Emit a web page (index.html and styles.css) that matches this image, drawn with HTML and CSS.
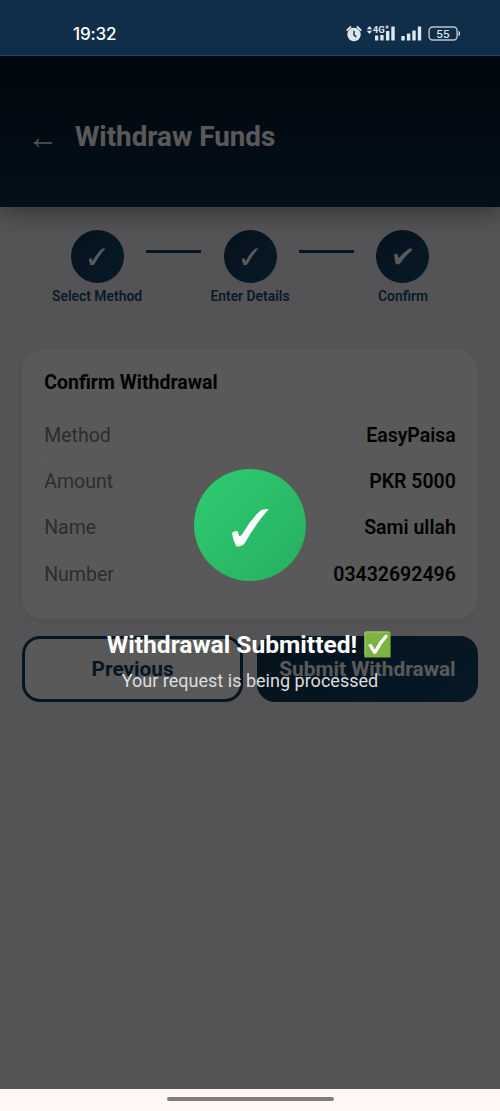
FILE: index.html
```html
<!DOCTYPE html>
<html lang="en">
<head>
<meta charset="utf-8">
<title>Withdraw Funds</title>
<link rel="stylesheet" href="styles.css">
</head>
<body>
<div class="phone">
  <div class="status">
    <span class="clock">19:32</span>
    <svg class="status-icons" width="116" height="20" viewBox="0 0 116 20" fill="#dfe7ee">
      <circle cx="9" cy="10.5" r="6.7"/>
      <path d="M2.2 6.2 5.6 3M15.8 6.2 12.4 3" stroke="#dfe7ee" stroke-width="1.8" stroke-linecap="round"/>
      <path d="M9 6.8V11l2.3 1.9" fill="none" stroke="#102d49" stroke-width="1.5"/>
      <path d="M21.8 5.2 24.5 2 27.2 5.2ZM21.8 6.8 24.5 10 27.2 6.8Z"/>
      <rect x="30" y="11.5" width="3.3" height="5" rx=".6"/><rect x="35.3" y="11" width="3.3" height="5.5" rx=".6"/><rect x="41" y="7" width="3.4" height="9.5" rx=".6"/><rect x="46.3" y="2.4" width="3.4" height="14.1" rx=".6"/>
      <text x="27.8" y="9" class="network">4G</text>
      <path d="M40.4 3h3.4M42.1 1.3v3.4" stroke="#dfe7ee" stroke-width="1.1"/>
      <rect x="56.3" y="12" width="3.4" height="4.5" rx=".6"/><rect x="61.9" y="9.5" width="3.4" height="7" rx=".6"/><rect x="67.3" y="6.4" width="3.4" height="10.1" rx=".6"/><rect x="72.8" y="2.4" width="3.4" height="14.1" rx=".6"/>
      <rect x="84.1" y="3" width="28" height="13" rx="3.5" fill="none" stroke="#b9c5d0" stroke-width="1.4"/>
      <path d="M113.5 7v5q1.5 0 1.5-2.5T113.5 7"/>
      <text x="98.1" y="13.6" text-anchor="middle" class="charge">55</text>
    </svg>
  </div>
  <main class="app">
    <header class="header">
      <svg class="back" width="20" height="12" viewBox="0 0 20 12" fill="none" stroke="#fff" stroke-width="1.3"><path d="M19 6H2M5.7 2Q4.4 5 1.5 6 4.4 7 5.7 10"/></svg>
      <h1>Withdraw Funds</h1>
    </header>
    <div class="steps">
      <div class="step"><div class="dot"><svg width="18" height="19" viewBox="0 0 40 42"><use href="#tick"/></svg></div><span>Select Method</span></div>
      <div class="link"></div>
      <div class="step"><div class="dot"><svg width="18" height="19" viewBox="0 0 40 42"><use href="#tick"/></svg></div><span>Enter Details</span></div>
      <div class="link"></div>
      <div class="step"><div class="dot"><svg width="20" height="19" viewBox="0 0 20 20" fill="#fff"><path d="M.8 8.2Q3 6 4.6 8.2L5.7 11.6Q11 5.2 16.8 1.5 19.5.8 19.4 3.6 12.5 9.2 7.2 17.2 4.5 19.5 2.2 17.4 1 13 .8 8.2Z"/></svg></div><span>Confirm</span></div>
    </div>
    <section class="card">
      <h2>Confirm Withdrawal</h2>
      <div class="row"><span>Method</span><b>EasyPaisa</b></div>
      <div class="row"><span>Amount</span><b>PKR 5000</b></div>
      <div class="row"><span>Name</span><b>Sami ullah</b></div>
      <div class="row"><span>Number</span><b>03432692496</b></div>
    </section>
    <div class="actions">
      <button class="btn outline">Previous</button>
      <button class="btn solid">Submit Withdrawal</button>
    </div>
    <div class="overlay">
      <div class="success"><svg width="40" height="42" viewBox="0 0 40 42"><path id="tick" fill="#fff" d="M2 27.2Q3.8 24.6 7.4 25 8.8 27.2 9.1 30 11 30.4 12.7 27.4 20.5 13.4 30.6 4.5 33.4 2.6 38.4 3L37.8 4.6Q26.8 16 14.2 38 10.8 41.2 6.3 40.2 3 34.5 2 27.2Z"/></svg></div>
      <div class="done"><span>Withdrawal Submitted!</span>
        <svg width="27" height="27" viewBox="0 0 27 27"><rect x=".4" y=".4" width="26.2" height="26.2" rx="1.2" fill="#7cb342"/><path d="M1 24V2q0-1 1-1h22" fill="none" stroke="#aed581" stroke-width=".8"/><path d="M4.2 13.8Q6 12.5 7.8 13.6L10.8 18.4Q15 10.5 20.5 4.6 22.3 3.2 23.8 4.5L23.5 6.1Q17.5 12.5 12.7 21.8 11.2 23.9 9.2 22.3Q6.7 18.5 4.2 13.8Z" fill="#fff"/></svg>
      </div>
      <p>Your request is being processed</p>
    </div>
  </main>
  <div class="nav"><i></i></div>
</div>
</body>
</html>
```
FILE: styles.css
```css
* { box-sizing: border-box; }
body { margin: 0; font-family: Roboto, "Noto Sans", sans-serif; }
h1, h2, p { margin: 0; }
.phone { width: 500px; height: 1111px; display: flex; flex-direction: column; overflow: hidden; }
.status { position: relative; z-index: 1; height: 56px; flex: none; background: #102d49; border-bottom: 1px solid #294256; display: flex; align-items: flex-start; justify-content: space-between; padding: 24px 39px 0 73px; }
.status-icons { overflow: visible; }
.clock { color: #fff; font: 500 17.1px/20px Inter, sans-serif; letter-spacing: -.2px; }
.network { font: 700 9.5px Roboto, sans-serif; paint-order: stroke; stroke: #102d49; stroke-width: 1.2px; }
.charge { font: 500 11px Inter, sans-serif; }
.app { flex: 1; position: relative; background: #f0f0f5; }
.header { height: 151px; background: linear-gradient(#04172a, #0c2c47); box-shadow: 0 6px 22px rgba(0,0,0,.38); display: flex; align-items: center; gap: 22px; padding: 11px 33px 0; }
.header h1 { color: #fff; font-size: 27.8px; line-height: 36px; font-weight: 700; }
.back { margin-top: 12px; }
.steps { display: flex; justify-content: center; padding: 22.5px 0 0; height: 141.5px; }
.step { width: 97.6px; display: flex; flex-direction: column; align-items: center; gap: 5px; color: #1a4e78; font-size: 13.9px; line-height: 17px; font-weight: 600; white-space: nowrap; }
.dot { width: 53px; height: 53px; border-radius: 50%; background: linear-gradient(135deg, #113452, #174b73); display: flex; align-items: center; justify-content: center; padding-top: 1px; }
.link { width: 55.4px; height: 3px; margin-top: 20.5px; background: #123e5e; }
.card { margin: 0 22.2px; height: 270.5px; background: #fff; border-radius: 22px; padding: 22px; box-shadow: 0 2px 8px rgba(0,30,50,.06); }
.card h2 { font-size: 19.5px; line-height: 23px; margin-bottom: 19.5px; font-weight: 700; }
.row { height: 46.2px; display: flex; align-items: center; justify-content: space-between; border-bottom: 1px solid #f2f2f2; font-size: 19.5px; color: #808080; }
.row:last-child { border: 0; }
.row b { color: #000; font-weight: 600; }
.actions { display: grid; grid-template-columns: 1fr 1fr; gap: 14px; padding: 16.5px 22.2px; }
.btn { height: 66px; border: 0; border-radius: 18px; font: 700 20.8px Roboto, sans-serif; padding: 0; }
.outline { border: 3px solid #123e5e; background: #fff; color: #123e5e; }
.solid { color: #fff; background: linear-gradient(135deg, #0e3452, #14486c); }
.overlay { position: absolute; inset: 0; background: rgba(0,0,0,.65); display: flex; flex-direction: column; align-items: center; padding-top: 413px; }
.success { width: 112px; height: 112px; border-radius: 50%; background: linear-gradient(135deg, #2ecc71, #27ae60); display: flex; align-items: center; justify-content: center; padding-top: 4px; }
.done { display: flex; align-items: center; gap: 7px; color: #fff; font-weight: 700; font-size: 24.6px; line-height: 30px; margin: 48.5px 2px 0 0; }
.done svg { margin-top: -1px; }
.overlay p { color: #ddd; font-size: 18.05px; line-height: 24px; margin-top: 9px; }
.nav { height: 22px; flex: none; background: #fff8f6; display: flex; justify-content: center; padding-top: 8px; }
.nav i { width: 167px; height: 4px; border-radius: 2px; background: #827c7b; }
```
